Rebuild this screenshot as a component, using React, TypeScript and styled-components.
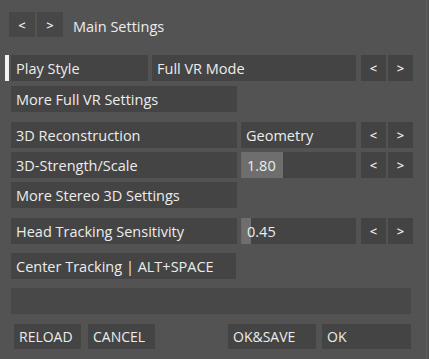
import React from 'react';
import styled, { createGlobalStyle } from 'styled-components';

const Global = createGlobalStyle`
  html, body {
    margin: 0;
    padding: 0;
    background: #525252;
  }
  body {
    font-family: "Open Sans", "Noto Sans", sans-serif;
    color: #ececec;
  }
`;

const Panel = styled.div`
  width: 427px;
  height: 359px;
  box-sizing: border-box;
  background: #535353;
  border-right: 1px solid #5d5d5d;
  padding: 12px 0 0 0;
  display: flex;
  flex-direction: column;
`;

const Header = styled.div`
  display: flex;
  align-items: center;
  padding-left: 9px;
  gap: 2px;
  height: 25px;
`;

const Title = styled.span`
  margin-left: 8px;
  padding-top: 4px;
  font-size: 14.5px;
`;

const Row = styled.div<{ $top: number }>`
  display: flex;
  align-items: stretch;
  height: 26px;
  margin-top: ${(p) => p.$top}px;
  padding-left: 11px;
  position: relative;
`;

const Indicator = styled.div`
  position: absolute;
  left: 5px;
  top: 0;
  width: 4px;
  height: 26px;
  background: #f2f2f2;
`;

const Box = styled.div<{ $w?: number }>`
  box-sizing: border-box;
  background: #444444;
  display: flex;
  align-items: center;
  padding-left: 5px;
  font-size: 14.5px;
  white-space: nowrap;
  overflow: hidden;
  ${(p) => (p.$w ? `width: ${p.$w}px; flex: none;` : 'flex: 1;')}
`;

const Value = styled(Box)`
  margin-left: 4px;
`;

const Arrows = styled.div`
  display: flex;
  gap: 2px;
  margin-left: 5px;
  margin-right: 13px;
`;

const Arrow = styled.div`
  width: 25px;
  height: 100%;
  background: #434343;
  display: flex;
  align-items: center;
  justify-content: center;
  font-size: 13px;
  font-weight: 600;
  color: #f0f0f0;
`;

const NavArrow = styled(Arrow)`
  width: 26px;
  height: 25px;
  background: #474747;
`;

const Empty = styled.div`
  flex: none;
  width: 400px;
  background: #484848;
`;

const Footer = styled.div`
  display: flex;
  height: 25px;
  margin-top: 10px;
  padding-left: 14px;
`;

const Button = styled(Box)<{ $gap: number }>`
  margin-left: ${(p) => p.$gap}px;
  font-size: 14px;
`;

type SliderProps = { value: string; pct: number };

const SliderBox = styled(Value)`
  border-left: 1px solid #6a6a6a;
`;

function Slider({ value, pct }: SliderProps) {
  return (
    <SliderBox
      style={{
        background: `linear-gradient(to right, #6e6e6e 0, #6e6e6e ${pct}px, #444444 ${pct}px)`,
      }}
    >
      {value}
    </SliderBox>
  );
}

function ArrowPair() {
  return (
    <Arrows>
      <Arrow>&lt;</Arrow>
      <Arrow>&gt;</Arrow>
    </Arrows>
  );
}

export default function App() {
  return (
    <>
      <Global />
      <Panel>
        <Header>
          <NavArrow>&lt;</NavArrow>
          <NavArrow>&gt;</NavArrow>
          <Title>Main Settings</Title>
        </Header>

        <Row $top={18}>
          <Indicator />
          <Box $w={137}>Play Style</Box>
          <Value>Full VR Mode</Value>
          <ArrowPair />
        </Row>
        <Row $top={5}>
          <Box $w={226}>More Full VR Settings</Box>
        </Row>

        <Row $top={10}>
          <Box $w={226}>3D Reconstruction</Box>
          <Value>Geometry</Value>
          <ArrowPair />
        </Row>
        <Row $top={4}>
          <Box $w={226}>3D-Strength/Scale</Box>
          <Slider value="1.80" pct={41} />
          <ArrowPair />
        </Row>
        <Row $top={4}>
          <Box $w={226}>More Stereo 3D Settings</Box>
        </Row>

        <Row $top={10}>
          <Box $w={226}>Head Tracking Sensitivity</Box>
          <Slider value="0.45" pct={9} />
          <ArrowPair />
        </Row>

        <Row $top={9}>
          <Box $w={225}>Center Tracking | ALT+SPACE</Box>
        </Row>
        <Row $top={9}>
          <Empty />
        </Row>

        <Footer>
          <Button $w={67} $gap={0}>RELOAD</Button>
          <Button $w={67} $gap={7}>CANCEL</Button>
          <Button $w={88} $gap={73}>OK&amp;SAVE</Button>
          <Button $w={89} $gap={6}>OK</Button>
        </Footer>
      </Panel>
    </>
  );
}
